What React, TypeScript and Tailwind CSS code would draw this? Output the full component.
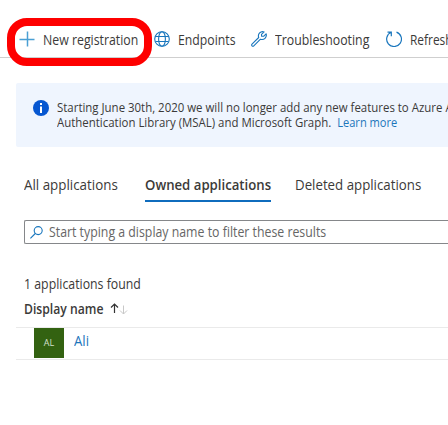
const FONT = "font-['Open_Sans','Noto_Sans',sans-serif]";

function Toolbar() {
  return (
    <div className="relative flex h-[58px] shrink-0 border-b border-[#cfcfcf] pt-[22px] pl-[19px] text-[14px] leading-[36px]">
      <div className="flex h-9 w-[134px] shrink-0 items-center">
        <svg className="mt-[-2px] mr-2 size-4 shrink-0" viewBox="0 0 16 16" fill="none" stroke="#4a9fd4" strokeWidth="1.5">
          <path d="M8.5 0.5v15M0.5 8.5h15" />
        </svg>
        <span className="origin-left scale-x-[0.88]">New registration</span>
      </div>
      <div className="flex h-9 w-[98px] shrink-0 items-center">
        <svg className="mt-[-2px] mr-2 ml-px size-4 shrink-0" viewBox="0 0 16 16" fill="none" stroke="#1976bd" strokeWidth="1.1">
          <circle cx="8" cy="8" r="7.3" />
          <ellipse cx="8" cy="8" rx="3.4" ry="7.3" />
          <path d="M1.5 5.5h13M1.5 10.5h13" />
        </svg>
        <span className="origin-left scale-x-[0.875]">Endpoints</span>
      </div>
      <div className="flex h-9 w-[135px] shrink-0 items-center">
        <svg className="mt-[-2px] mr-2 size-4 shrink-0" viewBox="0 0 16 16" fill="none" stroke="#1976bd" strokeWidth="1.1" strokeLinejoin="round">
          <path d="M13.1.9a4.3 4.3 0 0 0-5.4 5.6L1 13.1a1.2 1.2 0 0 0 0 1.7 1.2 1.2 0 0 0 1.8 0l6.7-6.6a4.3 4.3 0 0 0 5.6-5.4l-2.5 2.5-2-.1-.1-1.9z" />
        </svg>
        <span className="origin-left scale-x-[0.88]">Troubleshooting</span>
      </div>
      <div className="flex h-9 shrink-0 items-center">
        <svg className="mt-[-2px] mr-2 size-4 shrink-0" viewBox="0 0 16 16" fill="none" stroke="#1976bd" strokeWidth="1.2">
          <path d="M10.5 1.1A7.4 7.4 0 1 1 5.1 1.3M1.5 1.2h3.8v4" />
        </svg>
        <span className="origin-left scale-x-[0.85]">Refresh</span>
      </div>
      <div className="absolute top-[18px] left-[7px] h-[48px] w-[145px] rounded-[20px] border-8 border-[#fe0000]" />
    </div>
  );
}

function Banner() {
  return (
    <div className="mt-[25px] ml-4 flex h-16 shrink-0 rounded-l-[2px] bg-[#eff5fe] pt-[17px] pl-[17px]">
      <svg className="mr-2 size-4 shrink-0" viewBox="0 0 16 16">
        <circle cx="8" cy="8" r="8" fill="#0657d1" />
        <path d="M7 3h2v2H7zM7 6.5h2V13H7z" fill="#fff" />
      </svg>
      <div className="origin-left scale-x-[0.953] text-[12px] leading-[15px] whitespace-nowrap">
        <div>Starting June 30th, 2020 we will no longer add any new features to Azure Active</div>
        <div>
          Authentication Library (MSAL) and Microsoft Graph.
          <a className="ml-[6px] inline-block origin-left scale-x-[0.97] text-[#1b75bb]">Learn more</a>
        </div>
      </div>
    </div>
  );
}

function Tabs() {
  return (
    <div className="mt-[25px] ml-6 flex h-[30px] shrink-0 text-[14px] leading-[26px]">
      <div className="w-[121px] shrink-0">
        <span className="inline-block origin-left scale-x-[0.955]">All applications</span>
      </div>
      <div className="w-[126px] shrink-0 border-b-2 border-[#0f6cbd] font-semibold">
        <span className="inline-block origin-left scale-x-[0.942]">Owned applications</span>
      </div>
      <div className="ml-6 shrink-0">
        <span className="inline-block origin-left scale-x-[0.948]">Deleted applications</span>
      </div>
    </div>
  );
}

export default function App() {
  return (
    <div className={`${FONT} flex h-[425px] w-[448px] flex-col overflow-hidden bg-white whitespace-nowrap text-[#3b3a39]`}>
      <Toolbar />
      <Banner />
      <Tabs />
      <div className="mt-[18px] ml-6 flex h-6 shrink-0 items-center rounded-l-[2px] border border-r-0 border-[#85878a] pl-[5px] text-[#666666]">
        <svg className="mr-[6px] size-[13px] shrink-0" viewBox="0 0 13 13" fill="none" stroke="#1976bd" strokeWidth="1.1">
          <circle cx="8.2" cy="4.6" r="4" />
          <path d="M5.3 7.5.4 12.4" />
        </svg>
        <span className="origin-left scale-x-[0.88] text-[14px] leading-5">Start typing a display name to filter these results</span>
      </div>
      <div className="mt-[30px] ml-6 h-5 text-[14px] leading-5">
        <span className="inline-block origin-left scale-x-[0.88]">1 applications found</span>
      </div>
      <div className="mt-[5px] ml-6 flex h-5 text-[14px] leading-5 font-semibold">
        <span className="w-20 origin-left scale-x-[0.87]">Display name</span>
        <svg className="mt-[3px] ml-[6px] h-[13px] w-[18px]" viewBox="0 0 18 13" fill="none">
          <path d="M4.5 11V2M1 5.5 4.5 2 8 5.5" stroke="#333" strokeWidth="1.2" />
          <path d="M13.5 3.5V12M10 8.5l3.5 3.5L17 8.5" stroke="#c8c8c8" />
        </svg>
      </div>
      <div className="mt-2 ml-4 flex h-[33px] shrink-0 border-y border-[#eaeaea] pl-[18px]">
        <div className="flex size-[30px] items-center justify-center bg-[#336211] text-[9px] text-[#d5e0cc]">AL</div>
        <a className="ml-[10px] origin-left scale-x-[0.94] text-[14px] leading-[25px] text-[#1b75bb]">Ali</a>
      </div>
    </div>
  );
}
